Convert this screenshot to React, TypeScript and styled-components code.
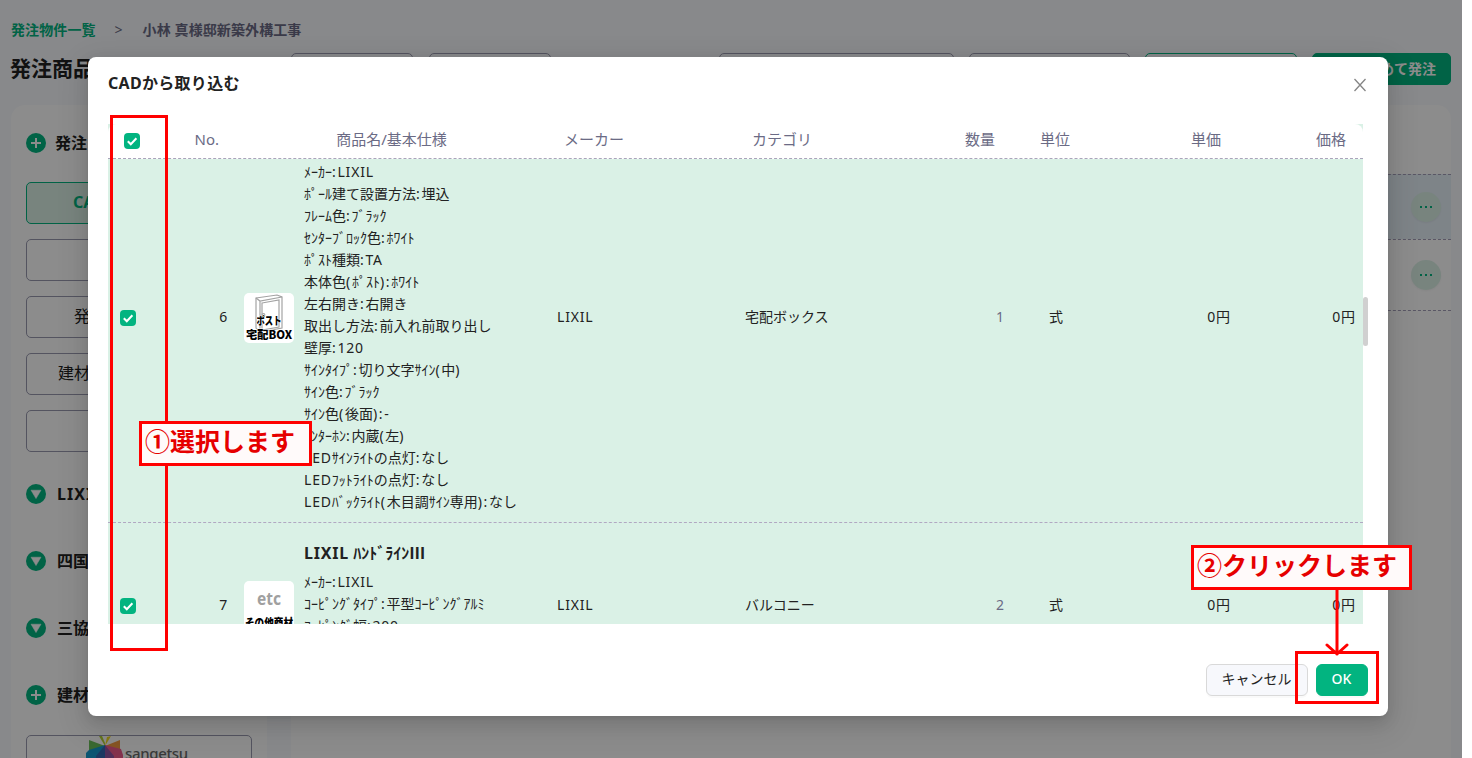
import React from "react";
import styled, { createGlobalStyle, css } from "styled-components";

const GREEN = "#02b480";
const MINT = "#daf1e6";
const SLATE = "#6b6b85";

const GlobalStyle = createGlobalStyle`
  * { box-sizing: border-box; }
  body {
    margin: 0;
    background: #fff;
    color: #222;
    font: 14px/22px "Noto Sans", "Noto Sans CJK JP", sans-serif;
    overflow: hidden;
  }
`;

const Page = styled.div`
  position: relative;
  width: 1462px;
  height: 758px;
  padding: 0 11px;
  background: #f7f9fd;
  overflow: hidden;
  white-space: nowrap;
`;

const Breadcrumb = styled.nav`
  display: flex;
  align-items: center;
  height: 53px;
  padding-top: 6px;
  gap: 19px;
  color: ${SLATE};
  font-weight: 600;
  letter-spacing: 0.1px;
`;

const BreadcrumbLink = styled.a`
  color: ${GREEN};
  font-weight: 700;
`;

const Separator = styled.span`
  width: 9px;
  font-weight: 400;
`;

const Toolbar = styled.header`
  display: flex;
  height: 52px;
`;

const PageTitle = styled.h1`
  width: 280px;
  margin: 0;
  font-size: 21px;
  line-height: 30px;
  text-indent: -1px;
`;

const ToolButton = styled.div<{ $width: number; $gap: number; $tone?: "line" | "fill" }>`
  width: ${(p) => p.$width}px;
  height: 32px;
  margin-right: ${(p) => p.$gap}px;
  padding: 0 14px;
  border: 1px solid ${(p) => (p.$tone ? GREEN : "#9a9ab0")};
  border-radius: 5px;
  background: ${(p) => (p.$tone === "fill" ? GREEN : "transparent")};
  color: #fff;
  font-weight: 700;
  line-height: 30px;
  text-align: right;
`;

const Columns = styled.main`
  display: flex;
  gap: 24px;
  height: 653px;
`;

const Sidebar = styled.aside`
  width: 256px;
  padding: 18px 15px 0;
  border-radius: 14px 14px 0 0;
  background: #fff;
  overflow: hidden;
`;

const Heading = styled.div<{ $after: number; $gap?: number; $tracking?: number }>`
  display: flex;
  align-items: center;
  gap: ${(p) => p.$gap ?? 11}px;
  height: 40px;
  margin-bottom: ${(p) => p.$after}px;
  font-size: 16px;
  font-weight: 700;
  letter-spacing: ${(p) => p.$tracking ?? 0}px;
`;

const ButtonStack = styled.div`
  display: flex;
  flex-direction: column;
  gap: 15px;
  margin-bottom: 22px;
`;

const SideButton = styled.div<{ $indent?: number; $active?: boolean }>`
  height: 42px;
  padding-left: ${(p) => p.$indent ?? 0}px;
  border: 1px solid #9a9ab0;
  border-radius: 5px;
  font-size: 16px;
  line-height: 38px;
  ${(p) =>
    p.$active &&
    css`
      border-color: ${GREEN};
      background: ${MINT};
      color: ${GREEN};
      font-weight: 700;
    `}
`;

const BrandButton = styled.div`
  display: flex;
  align-items: flex-start;
  height: 42px;
  padding-left: 59px;
  border: 1px solid #9a9ab0;
  border-radius: 5px;
  color: #6a6a6a;
  font: 500 15px/34px "Noto Sans", sans-serif;
  letter-spacing: -0.35px;
`;

const OrderPanel = styled.section`
  width: 1160px;
  padding-top: 69px;
  border-radius: 14px 14px 0 0;
  background: #fff;
`;

const OrderRow = styled.div<{ $height: number; $selected?: boolean }>`
  display: flex;
  align-items: center;
  justify-content: flex-end;
  height: ${(p) => p.$height}px;
  padding-right: 10px;
  border-top: 1px dashed #a49fb8;
  background: ${(p) => (p.$selected ? "#e6f0f8" : "transparent")};
`;

const MoreButton = styled.span`
  display: flex;
  align-items: center;
  justify-content: center;
  gap: 3px;
  width: 30px;
  height: 30px;
  border-radius: 50%;
  background: ${MINT};
  box-shadow: 0 1px 2px rgba(0, 0, 0, 0.05);
`;

const Dot = styled.i`
  width: 2px;
  height: 2px;
  background: ${GREEN};
`;

const Mask = styled.div`
  position: absolute;
  inset: 0;
  padding: 57px 74px 0 88px;
  background: rgba(0, 0, 0, 0.45);
`;

const Dialog = styled.div`
  display: flex;
  flex-direction: column;
  height: 659px;
  padding: 15px 20px 20px;
  border-radius: 8px;
  background: #fff;
  box-shadow: 0 6px 16px rgba(0, 0, 0, 0.1), 0 3px 6px -4px rgba(0, 0, 0, 0.14),
    0 9px 28px 8px rgba(0, 0, 0, 0.08);
`;

const DialogHeader = styled.div`
  display: flex;
  justify-content: space-between;
  height: 52px;
  font-size: 16px;
  font-weight: 700;
  letter-spacing: 0.3px;

  svg { margin: 6px 1px 0 0; }
`;

const TableArea = styled.div`
  display: flex;
  height: 500px;
`;

const Table = styled.div`
  width: 1255px;
  background: ${MINT};
`;

const columns = "40px 88px 313px 188px 188px 87px 88px 138px 125px";

const TableHead = styled.div`
  display: grid;
  grid-template-columns: ${columns};
  height: 35px;
  border-bottom: 1px dashed #aaa4bb;
  border-radius: 8px 8px 0 0;
  background: #fff;
  color: ${SLATE};
  font-size: 15px;
`;

const HeadCell = styled.div<{ $align?: string }>`
  padding: 0 17px 0 15px;
  line-height: 31px;
  text-align: ${(p) => p.$align ?? "left"};
`;

const HeadCheck = styled.div`
  padding: 9px 0 0 16px;
`;

const Viewport = styled.div`
  height: 465px;
  overflow: hidden;
`;

const Rows = styled.div`
  margin-top: -46px;
`;

const ItemRow = styled.div<{ $height: number }>`
  display: grid;
  grid-template-columns: ${columns};
  height: ${(p) => p.$height}px;
  border-bottom: 1px dashed #b1a8c2;
`;

const Cell = styled.div<{ $align?: string; $tone?: string }>`
  display: flex;
  align-items: center;
  justify-content: ${(p) => p.$align ?? "flex-start"};
  padding: 0 8px 1px;
  color: ${(p) => p.$tone ?? "inherit"};
`;

const CheckCell = styled(Cell)`
  padding: 1px 12px 0;
`;

const ProductCell = styled.div`
  display: flex;
  gap: 10px;
  padding-left: 8px;
`;

const Thumb = styled.div`
  align-self: center;
  width: 50px;
  height: 50px;
  margin-top: 1px;
  border-radius: 5px;
  background: #fff;
  overflow: hidden;
`;

const Details = styled.div`
  padding-top: 18px;
`;

const ProductName = styled.div`
  height: 22px;
  margin-bottom: 8px;
  font-size: 16px;
  font-weight: 700;
`;

const Latin = styled.span`
  letter-spacing: 0.8px;
`;

const Punctuation = styled.span`
  letter-spacing: 1.7px;
`;

const Roman = styled.span`
  font-family: "Noto Sans CJK JP", sans-serif;
`;

const ScrollThumb = styled.div`
  width: 5px;
  height: 49px;
  margin-top: 173px;
  border-radius: 3px;
  background: #d0d0d0;
`;

const CheckBox = styled.span`
  display: flex;
  width: 16px;
  height: 16px;
  border-radius: 4px;
  background: ${GREEN};
`;

const DialogFooter = styled.div`
  display: flex;
  justify-content: flex-end;
  gap: 8px;
  margin-top: auto;
`;

const FooterButton = styled.button<{ $primary?: boolean }>`
  width: ${(p) => (p.$primary ? 52 : 102)}px;
  height: 32px;
  padding: 0 1px 2px 0;
  border: 1px solid ${(p) => (p.$primary ? GREEN : "#d9d9d9")};
  border-radius: 6px;
  background: ${(p) => (p.$primary ? GREEN : "#f7f8fc")};
  color: ${(p) => (p.$primary ? "#fff" : "#222")};
  font: ${(p) => (p.$primary ? 500 : 400)} 14px/22px "Noto Sans", "Noto Sans CJK JP", sans-serif;
  box-shadow: 0 2px 0 rgba(0, 0, 0, 0.02);
`;

const Marker = styled.div<{ $x: number; $y: number; $w: number; $h: number }>`
  position: absolute;
  left: ${(p) => p.$x}px;
  top: ${(p) => p.$y}px;
  width: ${(p) => p.$w}px;
  height: ${(p) => p.$h}px;
  border: 3px solid #f00;
`;

const Callout = styled(Marker)`
  padding-left: 3px;
  background: #fffafa;
  color: #e60000;
  font: 700 25px/33px "Noto Sans CJK JP", sans-serif;
`;

const Arrow = styled.svg`
  position: absolute;
  left: 1325px;
  top: 590px;
`;

const Checked = () => (
  <CheckBox>
    <svg width="16" height="16" viewBox="0 0 16 16" fill="none">
      <path d="M3.8 8.2 6.8 11.2 12.4 5.3" stroke="#fff" strokeWidth="2" />
    </svg>
  </CheckBox>
);

const RoundIcon = ({ kind }: { kind: "plus" | "down" }) => (
  <svg width="20" height="20" viewBox="0 0 20 20">
    <circle cx="10" cy="10" r="10" fill={GREEN} />
    {kind === "plus" ? (
      <path d="M10 5v10M5 10h10" stroke="#fff" strokeWidth="2" />
    ) : (
      <path d="M5 6.2h10L10 14.6z" fill="#fff" stroke="#fff" strokeWidth=".5" strokeLinejoin="round" />
    )}
  </svg>
);

const BrandFlower = () => (
  <svg width="39" height="40" viewBox="0 0 39 40">
    <path d="M19 10 13 0 16 0 19 7z" fill="#b5d334" />
    <path d="M19 10 21 1 25 0z" fill="#f4dc21" />
    <path d="M19 10 3 4v12h12z" fill="#6abf59" />
    <path d="M19 10 34 4v12H23z" fill="#f59a42" />
    <path d="M19 9 3 14 0 17v23h19z" fill="#159bd0" />
    <path d="M19 9 35 13l2 6v21H19z" fill="#f05c8d" />
    <path d="M19 9 10 20v20h9z" fill="#3469b2" />
    <path d="M19 9 28 20v20h-9z" fill="#9357a5" />
  </svg>
);

const PostThumb = () => (
  <svg width="50" height="50" viewBox="0 0 50 50">
    <g fill="none" stroke="#a3a3a3" strokeWidth="1.2">
      <path d="M12 5 33 2l5 2v31l-22 4-4-4z" />
      <path d="M12 5l4 3 22-4M16 8v31M18 10l17-3v27l-17 3z" />
      <circle cx="19.5" cy="22" r="1.3" />
    </g>
    <g fill="#000" stroke="#fff" strokeWidth="1" paintOrder="stroke" fontWeight="900" fontFamily="'Noto Sans CJK JP'" textAnchor="middle">
      <text x="25" y="32" fontSize="11" textLength="25" lengthAdjust="spacingAndGlyphs">ポスト</text>
      <text x="25" y="46" fontSize="11.5" textLength="46" lengthAdjust="spacingAndGlyphs">宅配BOX</text>
    </g>
  </svg>
);

const OtherThumb = () => (
  <svg width="50" height="50" viewBox="0 0 50 50" fontWeight="700" textAnchor="middle">
    <text x="25" y="24" fontSize="17" fill="#a0a0a0" fontFamily="'Noto Sans'" textLength="24" lengthAdjust="spacingAndGlyphs">etc</text>
    <text x="25" y="46" fontSize="11" fill="#000" fontWeight="900" fontFamily="'Noto Sans CJK JP'" textLength="48" lengthAdjust="spacingAndGlyphs">その他商材</text>
  </svg>
);

interface Item {
  no: number;
  height: number;
  name?: string;
  lines: string[];
  thumb: React.ReactNode;
  category: string;
  quantity: number;
}

const items: Item[] = [
  {
    no: 6,
    height: 410,
    thumb: <PostThumb />,
    category: "宅配ボックス",
    quantity: 1,
    lines: [
      "ﾒｰｶｰ:LIXIL",
      "ﾎﾟｰﾙ建て設置方法:埋込",
      "ﾌﾚｰﾑ色:ﾌﾞﾗｯｸ",
      "ｾﾝﾀｰﾌﾞﾛｯｸ色:ﾎﾜｲﾄ",
      "ﾎﾟｽﾄ種類:TA",
      "本体色(ﾎﾟｽﾄ):ﾎﾜｲﾄ",
      "左右開き:右開き",
      "取出し方法:前入れ前取り出し",
      "壁厚:120",
      "ｻｲﾝﾀｲﾌﾟ:切り文字ｻｲﾝ(中)",
      "ｻｲﾝ色:ﾌﾞﾗｯｸ",
      "ｻｲﾝ色(後面):-",
      "ｲﾝﾀｰﾎﾝ:内蔵(左)",
      "LEDｻｲﾝﾗｲﾄの点灯:なし",
      "LEDﾌｯﾄﾗｲﾄの点灯:なし",
      "LEDﾊﾞｯｸﾗｲﾄ(木目調ｻｲﾝ専用):なし",
    ],
  },
  {
    no: 7,
    height: 165,
    name: "LIXIL ﾊﾝﾄﾞﾗｲﾝⅢ",
    thumb: <OtherThumb />,
    category: "バルコニー",
    quantity: 2,
    lines: ["ﾒｰｶｰ:LIXIL", "ｺｰﾋﾟﾝｸﾞﾀｲﾌﾟ:平型ｺｰﾋﾟﾝｸﾞｱﾙﾐ", "ｺｰﾋﾟﾝｸﾞ幅:200"],
  },
];

/* Sets Latin letters, digits and punctuation a little wider than the kana around them. */
const Mixed = ({ text }: { text: string }) => (
  <span>
    {text.split(/([A-Za-z0-9]+|[:()-]+|Ⅲ)/).map((run, i) => {
      if (run === "Ⅲ") return <Roman key={i}>{run}</Roman>;
      if (/^[A-Za-z0-9]/.test(run)) return <Latin key={i}>{run}</Latin>;
      if (/^[:()-]/.test(run)) return <Punctuation key={i}>{run}</Punctuation>;
      return run;
    })}
  </span>
);

const More = () => (
  <MoreButton><Dot /><Dot /><Dot /></MoreButton>
);

export default function App() {
  return (
    <Page>
      <GlobalStyle />
      <Breadcrumb>
        <BreadcrumbLink>発注物件一覧</BreadcrumbLink>
        <Separator>&gt;</Separator>
        <span>小林 真様邸新築外構工事</span>
      </Breadcrumb>
      <Toolbar>
        <PageTitle>発注商品</PageTitle>
        <ToolButton $width={122} $gap={16} />
        <ToolButton $width={122} $gap={168} />
        <ToolButton $width={235} $gap={15} />
        <ToolButton $width={161} $gap={15} />
        <ToolButton $width={152} $gap={15} $tone="line" />
        <ToolButton $width={139} $gap={0} $tone="fill">まとめて発注</ToolButton>
      </Toolbar>
      <Columns>
        <Sidebar>
          <Heading $after={19} $gap={9}><RoundIcon kind="plus" />発注</Heading>
          <ButtonStack>
            <SideButton $active $indent={46}>CAD</SideButton>
            <SideButton />
            <SideButton $indent={47}>発</SideButton>
            <SideButton $indent={31}>建材</SideButton>
            <SideButton />
          </ButtonStack>
          <Heading $after={27} $tracking={1}><RoundIcon kind="down" />LIXIL</Heading>
          <Heading $after={27}><RoundIcon kind="down" />四国</Heading>
          <Heading $after={27}><RoundIcon kind="down" />三協</Heading>
          <Heading $after={20}><RoundIcon kind="plus" />建材</Heading>
          <BrandButton><BrandFlower />sangetsu</BrandButton>
        </Sidebar>
        <OrderPanel>
          <OrderRow $height={65} $selected><More /></OrderRow>
          <OrderRow $height={71}><More /></OrderRow>
          <OrderRow $height={71} />
        </OrderPanel>
      </Columns>

      <Mask>
        <Dialog>
          <DialogHeader>
            CADから取り込む
            <svg width="14" height="14" viewBox="0 0 14 14">
              <path d="M1.5 1 12.5 13M12.5 1 1.5 13" stroke="#858585" strokeWidth="1.3" />
            </svg>
          </DialogHeader>
          <TableArea>
            <Table>
              <TableHead>
                <HeadCheck><Checked /></HeadCheck>
                <HeadCell $align="right">No.</HeadCell>
                <HeadCell $align="center">商品名/基本仕様</HeadCell>
                <HeadCell>メーカー</HeadCell>
                <HeadCell>カテゴリ</HeadCell>
                <HeadCell $align="right">数量</HeadCell>
                <HeadCell $align="center">単位</HeadCell>
                <HeadCell $align="right">単価</HeadCell>
                <HeadCell $align="right">価格</HeadCell>
              </TableHead>
              <Viewport>
                <Rows>
                  {items.map((item) => (
                    <ItemRow key={item.no} $height={item.height}>
                      <CheckCell><Checked /></CheckCell>
                      <Cell $align="flex-end"><Mixed text={String(item.no)} /></Cell>
                      <ProductCell>
                        <Thumb>{item.thumb}</Thumb>
                        <Details>
                          <ProductName>{item.name && <Mixed text={item.name} />}</ProductName>
                          {item.lines.map((line) => (
                            <div key={line}><Mixed text={line} /></div>
                          ))}
                        </Details>
                      </ProductCell>
                      <Cell><Mixed text="LIXIL" /></Cell>
                      <Cell>{item.category}</Cell>
                      <Cell $align="flex-end" $tone={SLATE}>{item.quantity}</Cell>
                      <Cell $align="center">式</Cell>
                      <Cell $align="flex-end"><Mixed text="0円" /></Cell>
                      <Cell $align="flex-end"><Mixed text="0円" /></Cell>
                    </ItemRow>
                  ))}
                </Rows>
              </Viewport>
            </Table>
            <ScrollThumb />
          </TableArea>
          <DialogFooter>
            <FooterButton>キャンセル</FooterButton>
            <FooterButton $primary>OK</FooterButton>
          </DialogFooter>
        </Dialog>
      </Mask>

      <Marker $x={110} $y={115} $w={58} $h={536} />
      <Callout $x={139} $y={421} $w={173} $h={45}>①選択します</Callout>
      <Marker $x={1295} $y={651} $w={84} $h={53} />
      <Callout $x={1191} $y={545} $w={221} $h={45}>②クリックします</Callout>
      <Arrow width="24" height="68" viewBox="0 0 24 68" fill="none">
        <path d="M12 0v64M2 55l10 9 10-9" stroke="#f00" strokeWidth="3" strokeLinecap="round" strokeLinejoin="round" />
      </Arrow>
    </Page>
  );
}
